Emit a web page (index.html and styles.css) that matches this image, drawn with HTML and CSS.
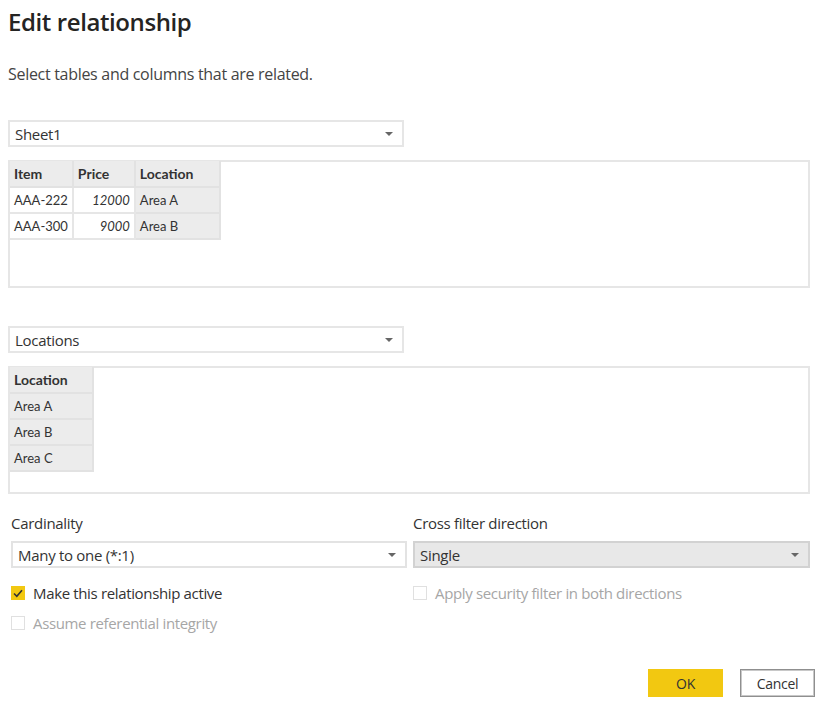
FILE: index.html
```html
<!DOCTYPE html>
<html lang="en">
<head>
    <meta charset="UTF-8">
    <title>Edit relationship</title>
    <link rel="stylesheet" href="styles.css">
</head>
<body>
    <div class="dialog">
        <h1 class="title">Edit relationship</h1>
        <p class="subtitle">Select tables and columns that are related.</p>

        <!-- First table -->
        <div class="select first-select">
            <span>Sheet1</span>
            <span class="arrow"></span>
        </div>
        <div class="preview">
            <table class="grid">
                <tr>
                    <th class="c-item">Item</th>
                    <th class="c-price">Price</th>
                    <th class="c-loc key">Location</th>
                </tr>
                <tr>
                    <td>AAA-222</td>
                    <td class="num">12000</td>
                    <td class="key">Area A</td>
                </tr>
                <tr>
                    <td>AAA-300</td>
                    <td class="num">9000</td>
                    <td class="key">Area B</td>
                </tr>
            </table>
        </div>

        <!-- Second table -->
        <div class="select second-select">
            <span>Locations</span>
            <span class="arrow"></span>
        </div>
        <div class="preview">
            <table class="grid">
                <tr><th class="c-loc2 key">Location</th></tr>
                <tr><td class="key">Area A</td></tr>
                <tr><td class="key">Area B</td></tr>
                <tr><td class="key">Area C</td></tr>
            </table>
        </div>

        <!-- Options -->
        <div class="options">
            <div class="col">
                <label class="label">Cardinality</label>
                <div class="select">
                    <span>Many to one (*:1)</span>
                    <span class="arrow"></span>
                </div>
                <div class="check">
                    <span class="box checked">
                        <svg width="10" height="9" viewBox="0 0 10 9"><path d="M1 4.5 L3.8 7.3 L9 1.2" fill="none" stroke="#333" stroke-width="1.6"/></svg>
                    </span>
                    <span>Make this relationship active</span>
                </div>
                <div class="check disabled">
                    <span class="box"></span>
                    <span>Assume referential integrity</span>
                </div>
            </div>
            <div class="col">
                <label class="label">Cross filter direction</label>
                <div class="select disabled-select">
                    <span>Single</span>
                    <span class="arrow"></span>
                </div>
                <div class="check disabled">
                    <span class="box"></span>
                    <span>Apply security filter in both directions</span>
                </div>
            </div>
        </div>

        <div class="buttons">
            <button class="btn primary">OK</button>
            <button class="btn">Cancel</button>
        </div>
    </div>
</body>
</html>
```

FILE: styles.css
```css
* {
    margin: 0;
    padding: 0;
    box-sizing: border-box;
}

body {
    font-family: 'Open Sans', 'Noto Sans', sans-serif;
    background-color: #fff;
    color: #333;
}

.dialog {
    width: 822px;
    padding: 0 8px 0 8px;
}

.title {
    font-size: 24px;
    font-weight: 600;
    color: #252423;
    line-height: 32px;
    padding-top: 6px;
    letter-spacing: -0.4px;
}

.subtitle {
    font-size: 16px;
    color: #444;
    line-height: 20px;
    margin-top: 26px;
    letter-spacing: -0.3px;
}

/* Dropdowns */
.select {
    width: 396px;
    height: 27px;
    border: 2px solid #e6e6e6;
    display: flex;
    align-items: center;
    justify-content: space-between;
    padding: 0 9px 0 5px;
    font-size: 15px;
    color: #333;
    letter-spacing: -0.3px;
}

.first-select {
    margin-top: 36px;
}

.second-select {
    margin-top: 38px;
}

.arrow {
    width: 0;
    height: 0;
    border-left: 4px solid transparent;
    border-right: 4px solid transparent;
    border-top: 4px solid #666;
}

/* Table previews */
.preview {
    width: 802px;
    height: 128px;
    border: 2px solid #e6e6e6;
    margin-top: 13px;
}

.grid {
    border-collapse: collapse;
    font-family: 'Lato', sans-serif;
    font-size: 13px;
    color: #333;
    margin: -1px 0 0 0;
}

.grid th,
.grid td {
    height: 26px;
    border: 2px solid #e6e6e6;
    padding: 0 4px;
    text-align: left;
    white-space: nowrap;
}

.grid tr:first-child th {
    border-top: none;
}

.grid th:first-child,
.grid td:first-child {
    border-left: none;
}

.grid th {
    background-color: #ececec;
    font-weight: 700;
    font-size: 14px;
    border-color: #e2e2e2;
}

.grid .key {
    background-color: #ececec;
    border-color: #e2e2e2;
}

.grid .num {
    text-align: right;
    font-style: italic;
}

.c-item { width: 62px; }
.c-price { width: 62px; }
.c-loc { width: 85px; }
.c-loc2 { width: 83px; }

/* Options */
.options {
    display: grid;
    grid-template-columns: 402px 397px;
    margin-top: 19px;
    padding-left: 3px;
}

.label {
    display: block;
    font-size: 15px;
    line-height: 20px;
    color: #333;
    letter-spacing: -0.3px;
    margin-bottom: 8px;
}

.options .select {
    width: 396px;
    height: 27px;
    border-color: #e3e3e3;
}

.options .disabled-select {
    background-color: #e8e8e8;
    border-color: #d2d2d2;
    width: 397px;
}

.check {
    display: flex;
    align-items: center;
    gap: 8px;
    font-size: 15px;
    letter-spacing: -0.35px;
    color: #333;
    height: 20px;
    margin-top: 15px;
}

.check + .check {
    margin-top: 10px;
}

.box {
    width: 14px;
    height: 14px;
    border: 1px solid #d6d6d6;
    display: flex;
    align-items: center;
    justify-content: center;
}

.box.checked {
    background-color: #f2c811;
    border-color: #f2c811;
}

.disabled {
    color: #a6a6a6;
}

.disabled .box {
    border-color: #e0e0e0;
}

/* Buttons */
.buttons {
    display: flex;
    justify-content: flex-end;
    gap: 17px;
    margin-top: 36px;
    margin-right: -1px;
}

.btn {
    width: 75px;
    height: 28px;
    font-family: 'Open Sans', 'Noto Sans', sans-serif;
    font-size: 14px;
    color: #333;
    background-color: #fff;
    border: 1px solid #8f8f8f;
    outline: 1px solid #c8c8c8;
    outline-offset: -2px;
    letter-spacing: -0.3px;
}

.btn.primary {
    background-color: #f2c811;
    border: none;
    outline: none;
}
```
